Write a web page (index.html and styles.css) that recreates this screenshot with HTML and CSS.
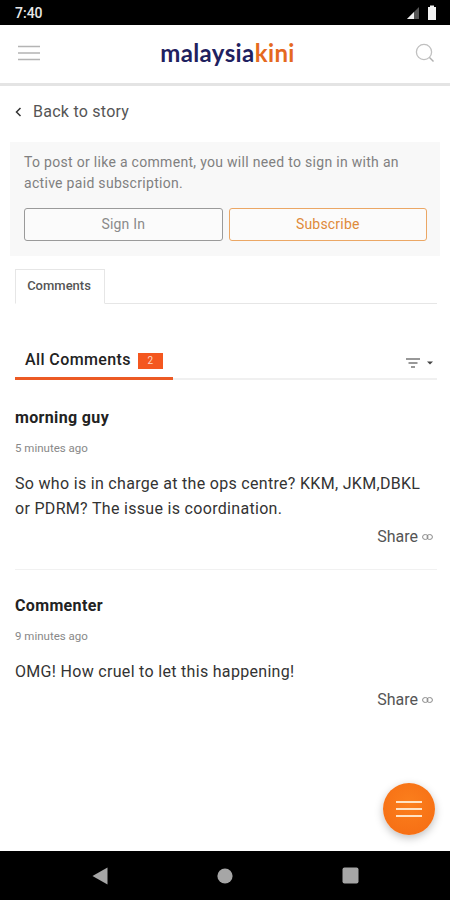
FILE: index.html
```html
<!DOCTYPE html>
<html lang="en">
<head>
<meta charset="utf-8">
<title>Malaysiakini comments</title>
<link rel="stylesheet" href="styles.css">
</head>
<body>
<div class="screen">
  <div class="status">
    <span class="time">7:40</span>
    <div class="status-icons">
      <svg width="14" height="14" viewBox="0 0 14 14"><path d="M1 13 L13 1 V13 Z" fill="#555"/><path d="M1 13 L8 6 V13 Z" fill="#eee"/></svg>
      <svg width="10" height="16" viewBox="0 0 10 16"><path d="M3 0.5 H7 V2 H9 V15 H1 V2 H3 Z" fill="#f2f2f2"/></svg>
    </div>
  </div>
  <header class="topbar">
    <svg class="menu-icon" width="22" height="16" viewBox="0 0 22 16"><path d="M0 1.5 H22 M0 8 H22 M0 14.5 H22" stroke="#b4b4b4" stroke-width="1.6" fill="none"/></svg>
    <div class="logo">malaysia<span class="logo-kini">kini</span></div>
    <svg class="search-icon" width="20" height="20" viewBox="0 0 20 20"><circle cx="9" cy="9" r="7.6" stroke="#c0c0c0" stroke-width="1.3" fill="none"/><path d="M14.5 14.5 L18.5 18.5" stroke="#b0b0b0" stroke-width="1.4"/></svg>
  </header>
  <main class="content">
    <div class="back">
      <svg width="7" height="10" viewBox="0 0 7 10"><path d="M5.5 1 L1.5 5 L5.5 9" stroke="#333" stroke-width="1.5" fill="none"/></svg>
      <span>Back to story</span>
    </div>
    <section class="notice">
      <p>To post or like a comment, you will need to sign in with an active paid subscription.</p>
      <div class="actions">
        <button class="btn btn-signin">Sign In</button>
        <button class="btn btn-subscribe">Subscribe</button>
      </div>
    </section>
    <div class="tabs"><div class="tab">Comments</div></div>
    <div class="all-bar">
      <div class="all-tab">All Comments <span class="badge">2</span></div>
      <div class="filter">
        <svg width="14" height="10" viewBox="0 0 14 10"><path d="M0 1 H14 M2.5 5 H11.5 M5 9 H9" stroke="#777" stroke-width="1.4" fill="none"/></svg>
        <svg width="6" height="4" viewBox="0 0 6 4"><path d="M0 0.5 H6 L3 3.5 Z" fill="#444"/></svg>
      </div>
    </div>
    <article class="comment comment-first">
      <div class="author">morning guy</div>
      <div class="ago">5 minutes ago</div>
      <p class="body">So who is in charge at the ops centre? KKM, JKM,DBKL or PDRM? The issue is coordination.</p>
      <div class="share">Share
        <svg width="11" height="6" viewBox="0 0 11 6"><rect x="0.6" y="0.6" width="5.4" height="4.8" rx="2.4" stroke="#888" fill="none"/><rect x="5" y="0.6" width="5.4" height="4.8" rx="2.4" stroke="#888" fill="none"/></svg>
      </div>
    </article>
    <article class="comment">
      <div class="author">Commenter</div>
      <div class="ago">9 minutes ago</div>
      <p class="body">OMG! How cruel to let this happening!</p>
      <div class="share">Share
        <svg width="11" height="6" viewBox="0 0 11 6"><rect x="0.6" y="0.6" width="5.4" height="4.8" rx="2.4" stroke="#888" fill="none"/><rect x="5" y="0.6" width="5.4" height="4.8" rx="2.4" stroke="#888" fill="none"/></svg>
      </div>
    </article>
    <div class="fab">
      <svg width="26" height="18" viewBox="0 0 26 18"><path d="M0 2 H26 M0 9 H26 M0 16 H26" stroke="#ffe3c4" stroke-width="2" fill="none"/></svg>
    </div>
  </main>
  <nav class="navbar">
    <svg width="16" height="18" viewBox="0 0 16 18"><path d="M15.5 0.5 V17.5 L0.5 9 Z" fill="#a6a6a6"/></svg>
    <svg width="16" height="16" viewBox="0 0 16 16"><circle cx="8" cy="8" r="7.6" fill="#a6a6a6"/></svg>
    <svg width="17" height="17" viewBox="0 0 17 17"><rect x="0.5" y="0.5" width="16" height="16" rx="2" fill="#a6a6a6"/></svg>
  </nav>
</div>
</body>
</html>
```
FILE: styles.css
```css
* { box-sizing: border-box; }
html, body { margin: 0; padding: 0; }
body { font-family: Roboto, "Liberation Sans", sans-serif; background: #fff; color: #222; }
.screen { width: 450px; height: 900px; display: flex; flex-direction: column; overflow: hidden; }

.status { height: 25px; flex: none; background: #000; color: #e8e8e8; display: flex; align-items: center; justify-content: space-between; padding: 1px 13px 0 15px; }
.time { font-size: 14px; font-weight: 500; }
.status-icons { display: flex; align-items: center; gap: 7px; }

.topbar { height: 61px; flex: none; background: #fff; border-bottom: 3px solid #e4e4e4; display: flex; align-items: center; justify-content: space-between; padding: 0 15px 3px 18px; }
.logo { font-family: Lato, sans-serif; font-weight: 700; font-size: 24px; color: #1f2160; letter-spacing: 0.4px; }
.logo-kini { color: #e5691f; }

.content { flex: 1; position: relative; min-height: 0; padding: 0 13px 0 15px; }
.back { display: flex; align-items: center; gap: 11px; height: 50px; font-size: 16px; color: #555; padding-top: 1px; letter-spacing: 0.25px; }

.notice { margin: 6px -3px 0 -5px; height: 114px; background: #f8f8f8; padding: 10px 13px 0 14px; }
.notice p { margin: 0; font-size: 14px; line-height: 21px; color: #808080; letter-spacing: 0.3px; }
.actions { display: flex; gap: 6px; margin-top: 14px; }
.btn { flex: 1; height: 33px; border-radius: 3px; background: #fbfbfb; font-family: inherit; font-size: 14px; letter-spacing: 0.2px; padding: 0 0 1px; }
.btn-signin { border: 1px solid #9a9a9a; color: #8a8a8a; }
.btn-subscribe { border: 1px solid #eba765; color: #df8a3a; }

.tabs { margin-top: 13px; height: 35px; border-bottom: 1px solid #e6e6e6; display: flex; }
.tab { width: 90px; height: 35px; border: 1px solid #e6e6e6; border-bottom: 1px solid #fff; background: #fff; font-size: 13px; font-weight: 500; color: #555; display: flex; align-items: center; justify-content: center; padding: 0 2px 2px 0; }

.all-bar { margin-top: 40px; height: 36px; border-bottom: 2px solid #f0f0f0; display: flex; align-items: flex-start; justify-content: space-between; }
.all-tab { width: 158px; height: 36px; border-bottom: 3px solid #ec5a24; padding: 6px 0 0 10px; font-size: 16px; font-weight: 500; letter-spacing: 0.4px; color: #222; display: flex; align-items: flex-start; gap: 7px; line-height: 20px; white-space: nowrap; }
.badge { width: 25px; height: 16px; margin-top: 3px; background: #f4571f; color: #ffd9c6; font-size: 10px; font-weight: 400; line-height: 16px; text-align: center; }
.filter { display: flex; align-items: center; gap: 7px; padding: 14px 0 0; margin-right: 4px; }

.comment { padding-top: 28px; height: 190px; border-bottom: 1px solid #f1f1f1; }
.comment + .comment { height: auto; border-bottom: none; padding-top: 26px; }
.author { font-size: 16px; font-weight: 700; color: #222; line-height: 20px; letter-spacing: 0.35px; }
.ago { font-size: 11.5px; color: #888; margin-top: 12px; line-height: 16px; }
.body { margin: 15px 4px 0 0; font-size: 16px; line-height: 25px; color: #333; letter-spacing: 0.31px; }
.share { display: flex; align-items: center; justify-content: flex-end; gap: 4px; font-size: 16px; line-height: 20px; color: #555; margin: 6px 4px 0 0; }

.fab { position: absolute; right: 15px; top: 697px; width: 52px; height: 52px; border-radius: 50%; background: radial-gradient(circle at 50% 40%, #fb7f1d, #f56b12); box-shadow: 0 3px 8px rgba(0,0,0,0.25); display: flex; align-items: center; justify-content: center; }

.navbar { height: 49px; flex: none; background: #000; display: flex; align-items: center; justify-content: space-between; padding: 0 91px 0 92px; }
```
